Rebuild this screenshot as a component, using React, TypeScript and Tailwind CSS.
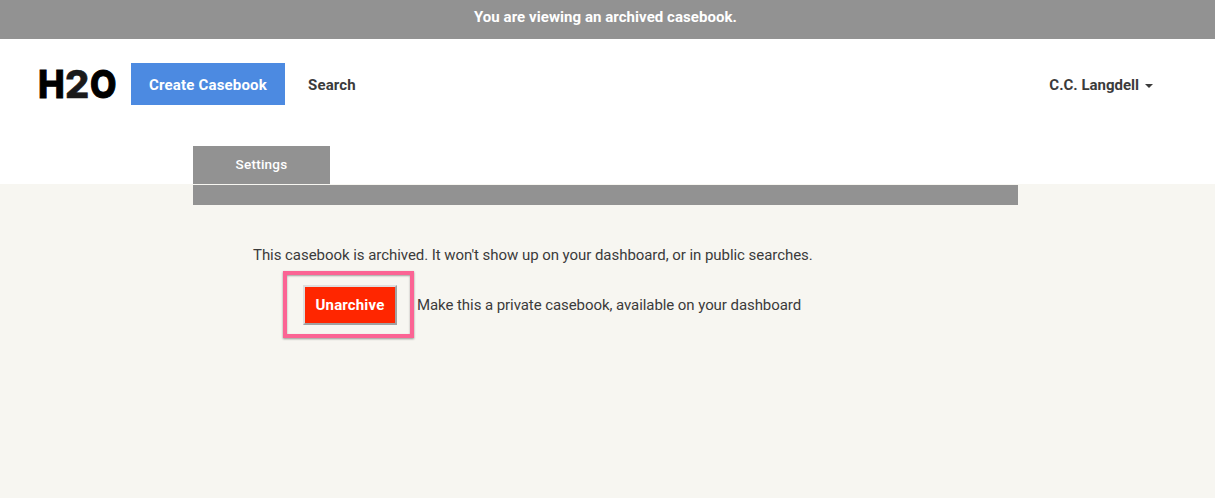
import React from "react";

export default function App() {
  return (
    <div className="h-[498px] w-[1215px] overflow-hidden bg-[#f7f6f1] font-['Roboto','Liberation_Sans',sans-serif] text-[15px] text-[#3b3b3b]">
      <div className="flex h-[39px] justify-center bg-[#929292] pr-1 pt-[7px] font-bold leading-[20px] tracking-[0.06px] text-white">
        You are viewing an archived casebook.
      </div>
      <header className="h-[145px] bg-white">
        <nav className="flex h-[107px] items-start pt-6 font-bold leading-[44px]">
          <a className="ml-[38px] flex w-[93px] font-['Inter',sans-serif] text-[38px] font-extrabold leading-[43px] text-black">
            <span className="w-[27px] origin-left scale-x-[0.94] [-webkit-text-stroke:0.8px_black]">H</span>
            <span className="w-[25px] origin-left text-[#1a1a1a] [-webkit-text-stroke:0.6px_#1a1a1a]">2</span>
            <span className="w-[28px] origin-left scale-x-[0.9] [-webkit-text-stroke:1px_black]">O</span>
          </a>
          <a className="flex h-[42px] w-[154px] justify-center bg-[#4c8ae1] tracking-[0.18px] text-white">Create Casebook</a>
          <a className="ml-[23px] tracking-[0.15px]">Search</a>
          <a className="ml-auto mr-[62px] flex items-center gap-1.5">
            C.C. Langdell
            <svg className="mt-px" width="8" height="4" viewBox="0 0 8 4" fill="currentColor"><path d="M0 0h8L4 4z" /></svg>
          </a>
        </nav>
        <div className="ml-[193px] flex h-[38px] w-[137px] justify-center bg-[#929292] text-[13.5px] font-medium leading-[37px] tracking-[0.25px] text-white">Settings</div>
      </header>
      <main className="ml-[193px] w-[825px] pt-px">
        <div className="h-5 bg-[#929292]" />
        <p className="ml-[60px] mt-10 whitespace-nowrap leading-5 tracking-[-0.05px]">
          This casebook is archived. It won't show up on your dashboard, or in public searches.
        </p>
        <div className="ml-[90px] mt-[6px] flex h-[67px] items-center">
          <div className="flex h-[67px] w-[131px] items-center border-4 border-[#fb6494] pl-4 shadow-[0_1px_2px_rgba(0,0,0,0.4),inset_0_1px_2px_rgba(0,0,0,0.35)]">
            <button className="h-10 w-[94px] border-2 border-b-[#a1a1a1] border-l-[#dedede] border-r-[#a1a1a1] border-t-[#dedede] bg-[#ff2600] pt-0.5 font-bold tracking-[0.15px] text-white">Unarchive</button>
          </div>
          <span className="ml-[3px] whitespace-nowrap pt-px tracking-[-0.07px]">Make this a private casebook, available on your dashboard</span>
        </div>
      </main>
    </div>
  );
}
